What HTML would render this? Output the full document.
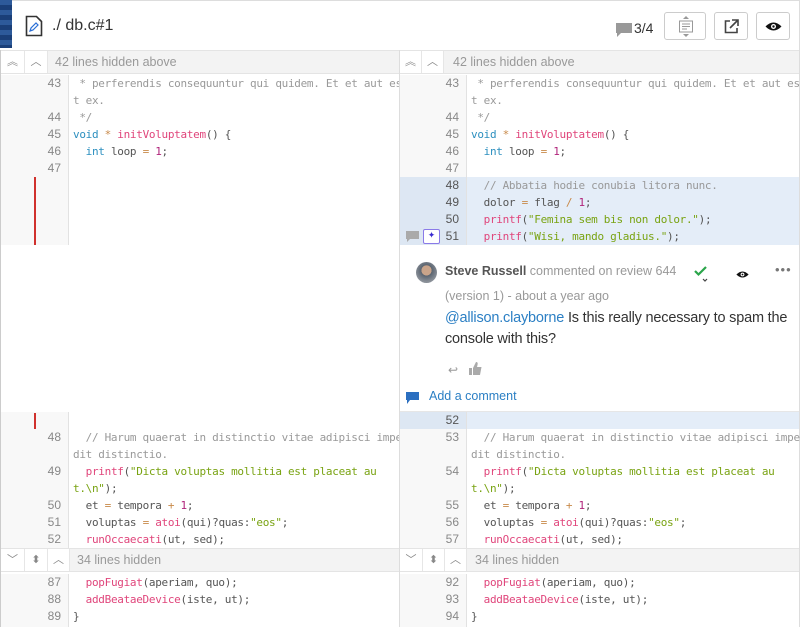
<!DOCTYPE html>
<html><head><meta charset="utf-8"><style>
*{box-sizing:border-box;margin:0;padding:0}
body{width:800px;height:627px;overflow:hidden;background:#fff;font-family:"Liberation Sans",sans-serif;position:relative}
.abs{position:absolute}
.side{position:absolute;top:0;width:400px;height:627px}
.row{position:absolute;left:0;height:17px;width:100%;font-family:"DejaVu Sans Mono","Liberation Mono",monospace;font-size:11px;letter-spacing:-0.3px;line-height:17px;color:#555;white-space:pre}
.g{position:absolute;left:0;width:68px;height:100%;text-align:right;padding-right:7px;color:#888;background:#f8f8f8;border-right:1px solid #e2e2e2;font-family:"Liberation Sans",sans-serif;font-size:12px;letter-spacing:0}
.c{position:absolute;left:72px}
.hl .g{background:#dde7f3;color:#555}
.hl{background:#e4edf8}
.hid{position:absolute;height:24px;width:100%;background:#f3f3f3;border-top:1px solid #e4e4e4;border-bottom:1px solid #e4e4e4;font-size:12.5px;color:#999;line-height:23px}
.hb{position:absolute;top:0;width:33px;height:22px;background:#fff;border-right:1px solid #e6e6e6;color:#888;font-size:11px;text-align:center}
.cm{color:#999}.kw{color:#2c8fbf}.fn{color:#e0457b}.st{color:#79a312}.nu{color:#b0247a}.op{color:#c88a4a}
.btn{position:absolute;top:12px;height:28px;border:1px solid #ccc;border-radius:3px;background:#fff}
</style></head><body>
<div class="abs" style="left:0;top:0;width:800px;height:50px;border-top:1px solid #ddd;border-right:1px solid #ddd"></div>
<div class="abs" style="left:0;top:0;width:12px;height:48px;background:repeating-linear-gradient(#2d5a9a 0 5px,#1a3f78 5px 10px)"></div>
<svg class="abs" style="left:25px;top:15px" width="18" height="22" viewBox="0 0 18 22"><path d="M1.5 1.5h10l5 5v14h-15z" fill="none" stroke="#333" stroke-width="1.6"/><path d="M5 16l1-3 5-5 2 2-5 5z" fill="none" stroke="#2a6fd6" stroke-width="1.2"/></svg>
<div class="abs" style="left:52px;top:17px;font-size:16px;color:#333">./ db.c#1</div>
<svg class="abs" style="left:616px;top:23px" width="16" height="14" viewBox="0 0 16 14"><path d="M0 0h16v10H5l-4 4v-4H0z" fill="#999"/></svg>
<div class="abs" style="left:634px;top:20px;font-size:14px;color:#333">3/4</div>
<div class="btn" style="left:664px;width:42px"><svg style="position:absolute;left:13px;top:3px" width="16" height="22" viewBox="0 0 16 22"><path d="M8 0l3 3H5z" fill="#999"/><rect x="1.5" y="5" width="13" height="11" fill="none" stroke="#999"/><path d="M4 8h8M4 10.5h8M4 13h5" stroke="#999"/><path d="M8 21l3-3H5z" fill="#999"/></svg></div>
<div class="btn" style="left:714px;width:34px"><svg style="position:absolute;left:9px;top:6px" width="15" height="15" viewBox="0 0 15 15"><path d="M6 2H1.5v11.5H13V9" fill="none" stroke="#444" stroke-width="1.6"/><path d="M8 1h6v6M14 1L6 9" fill="none" stroke="#444" stroke-width="1.6"/></svg></div>
<div class="btn" style="left:756px;width:34px"><svg style="position:absolute;left:8px;top:8px" width="17" height="11" viewBox="0 0 17 11"><path d="M0.5 5.5Q8.5-2.5 16.5 5.5Q8.5 13.5 0.5 5.5z" fill="#111"/><circle cx="8.5" cy="5.5" r="2.5" fill="#fff"/><circle cx="8.5" cy="5.5" r="1.2" fill="#111"/></svg></div>
<div class="abs" style="left:0;top:50px;width:1px;height:577px;background:#ccc"></div>
<div class="abs" style="left:799px;top:50px;width:1px;height:577px;background:#ddd"></div>

<div class="side" style="left:1px;width:398px">
 <div class="hid" style="top:50px"><div class="hb" style="left:0;width:24px">︽</div><div class="hb" style="left:24px;width:23px">︿</div><span style="position:absolute;left:54px">42 lines hidden above</span></div>
 <div class="row" style="top:75px"><div class="g">43</div><span class="c cm"> * perferendis consequuntur qui quidem. Et et aut es</span></div>
 <div class="row" style="top:92px"><div class="g"></div><span class="c cm">t ex.</span></div>
 <div class="row" style="top:109px"><div class="g">44</div><span class="c cm"> */</span></div>
 <div class="row" style="top:126px"><div class="g">45</div><span class="c"><span class="kw">void</span> <span class="op">*</span> <span class="fn">initVoluptatem</span>() {</span></div>
 <div class="row" style="top:143px"><div class="g">46</div><span class="c">  <span class="kw">int</span> loop <span class="op">=</span> <span class="nu">1</span>;</span></div>
 <div class="row" style="top:160px"><div class="g">47</div></div>
 <div class="row" style="top:177px;height:68px"><div class="g"></div><div class="abs" style="left:33px;top:0;width:2px;height:68px;background:#d0312d"></div></div>
 <div class="row" style="top:412px"><div class="g"></div><div class="abs" style="left:33px;top:1px;width:2px;height:16px;background:#d0312d"></div></div>
 <div class="row" style="top:429px"><div class="g">48</div><span class="c cm">  // Harum quaerat in distinctio vitae adipisci impe</span></div>
 <div class="row" style="top:446px"><div class="g"></div><span class="c cm">dit distinctio.</span></div>
 <div class="row" style="top:463px"><div class="g">49</div><span class="c">  <span class="fn">printf</span>(<span class="st">"Dicta voluptas mollitia est placeat au</span></span></div>
 <div class="row" style="top:480px"><div class="g"></div><span class="c"><span class="st">t.\n"</span>);</span></div>
 <div class="row" style="top:497px"><div class="g">50</div><span class="c">  et <span class="op">=</span> tempora <span class="op">+</span> <span class="nu">1</span>;</span></div>
 <div class="row" style="top:514px"><div class="g">51</div><span class="c">  voluptas <span class="op">=</span> <span class="fn">atoi</span>(qui)?quas:<span class="st">"eos"</span>;</span></div>
 <div class="row" style="top:531px"><div class="g">52</div><span class="c">  <span class="fn">runOccaecati</span>(ut, sed);</span></div>
 <div class="hid" style="top:548px"><div class="hb" style="left:0;width:24px">﹀</div><div class="hb" style="left:24px;width:23px">⬍</div><div class="hb" style="left:47px;width:22px">︿</div><span style="position:absolute;left:76px">34 lines hidden</span></div>
 <div class="row" style="top:574px"><div class="g">87</div><span class="c">  <span class="fn">popFugiat</span>(aperiam, quo);</span></div>
 <div class="row" style="top:591px"><div class="g">88</div><span class="c">  <span class="fn">addBeataeDevice</span>(iste, ut);</span></div>
 <div class="row" style="top:608px;height:19px"><div class="g">89</div><span class="c">}</span></div>
</div>
<div class="abs" style="left:399px;top:50px;width:1px;height:577px;background:#ddd"></div>

<div class="side" style="left:400px;width:399px">
 <div class="hid" style="top:50px"><div class="hb" style="left:0;width:22px">︽</div><div class="hb" style="left:22px;width:22px">︿</div><span style="position:absolute;left:53px">42 lines hidden above</span></div>
 <div class="row" style="top:75px"><div class="g" style="width:67px">43</div><span class="c cm" style="left:71px"> * perferendis consequuntur qui quidem. Et et aut es</span></div>
 <div class="row" style="top:92px"><div class="g" style="width:67px"></div><span class="c cm" style="left:71px">t ex.</span></div>
 <div class="row" style="top:109px"><div class="g" style="width:67px">44</div><span class="c cm" style="left:71px"> */</span></div>
 <div class="row" style="top:126px"><div class="g" style="width:67px">45</div><span class="c" style="left:71px"><span class="kw">void</span> <span class="op">*</span> <span class="fn">initVoluptatem</span>() {</span></div>
 <div class="row" style="top:143px"><div class="g" style="width:67px">46</div><span class="c" style="left:71px">  <span class="kw">int</span> loop <span class="op">=</span> <span class="nu">1</span>;</span></div>
 <div class="row" style="top:160px"><div class="g" style="width:67px">47</div></div>
 <div class="row hl" style="top:177px"><div class="g" style="width:67px">48</div><span class="c cm" style="left:71px">  // Abbatia hodie conubia litora nunc.</span></div>
 <div class="row hl" style="top:194px"><div class="g" style="width:67px">49</div><span class="c" style="left:71px">  dolor <span class="op">=</span> flag <span class="op">/</span> <span class="nu">1</span>;</span></div>
 <div class="row hl" style="top:211px"><div class="g" style="width:67px">50</div><span class="c" style="left:71px">  <span class="fn">printf</span>(<span class="st">"Femina sem bis non dolor."</span>);</span></div>
 <div class="row hl" style="top:228px"><div class="g" style="width:67px">51</div><span class="c" style="left:71px">  <span class="fn">printf</span>(<span class="st">"Wisi, mando gladius."</span>);</span>
  <svg class="abs" style="left:6px;top:3px" width="13" height="11" viewBox="0 0 13 11"><path d="M0 0h13v8H4l-3 3V8H0z" fill="#aaa"/></svg>
  <div class="abs" style="left:23px;top:1px;width:17px;height:15px;border:1px solid #8a7ae8;border-radius:2px;background:#fff;color:#3a2bd0;font-size:9px;line-height:13px;text-align:center;font-family:'DejaVu Sans',sans-serif;letter-spacing:0">✦</div>
 </div>
 <div class="abs" style="left:16px;top:262px;width:21px;height:21px;border-radius:50%;background:radial-gradient(circle at 50% 40%,#c9a48a 0 30%,#5a6470 32%,#8a9098 70%)"></div>
 <div class="abs" style="left:45px;top:264px;font-size:12.5px;color:#999"><b style="color:#555">Steve Russell</b> commented on review 644</div>
 <svg class="abs" style="left:294px;top:266px" width="14" height="18" viewBox="0 0 14 18"><path d="M1 5l3.5 3.5L12 1" fill="none" stroke="#2aa54a" stroke-width="2.2"/><path d="M9 13l2 2 2-2" fill="none" stroke="#444" stroke-width="1.2"/></svg>
 <svg class="abs" style="left:336px;top:270px" width="13" height="9" viewBox="0 0 17 11"><path d="M0.5 5.5Q8.5-2.5 16.5 5.5Q8.5 13.5 0.5 5.5z" fill="#111"/><circle cx="8.5" cy="5.5" r="2.5" fill="#fff"/><circle cx="8.5" cy="5.5" r="1.2" fill="#111"/></svg>
 <div class="abs" style="left:375px;top:262px;font-size:13px;color:#777;letter-spacing:1px">•••</div>
 <div class="abs" style="left:45px;top:289px;font-size:12.5px;color:#999">(version 1) - about a year ago</div>
 <div class="abs" style="left:45px;top:308px;font-size:14.5px;color:#333;line-height:21px;white-space:nowrap;letter-spacing:-0.2px"><span style="color:#2b7fc4">@allison.clayborne</span> Is this really necessary to spam the<br>console with this?</div>
 <div class="abs" style="left:48px;top:363px;font-size:12px;color:#999">↩</div>
 <svg class="abs" style="left:69px;top:362px" width="13" height="13" viewBox="0 0 13 13"><path d="M0 6h3v7H0zM4 6l3-6c1.5 0 2 1 1.5 3L8 5h4.5l-1.5 8H4z" fill="#aaa"/></svg>
 <svg class="abs" style="left:6px;top:392px" width="13" height="12" viewBox="0 0 13 12"><path d="M0 0h13v8H4l-3 4V8H0z" fill="#2b6fc0"/></svg>
 <div class="abs" style="left:29px;top:389px;font-size:12.5px;color:#2b7fc4">Add a comment</div>
 <div class="abs" style="left:0;top:411px;width:399px;height:1px;background:#e6e6e6"></div>
 <div class="row hl" style="top:412px"><div class="g" style="width:67px">52</div></div>
 <div class="row" style="top:429px"><div class="g" style="width:67px">53</div><span class="c cm" style="left:71px">  // Harum quaerat in distinctio vitae adipisci impe</span></div>
 <div class="row" style="top:446px"><div class="g" style="width:67px"></div><span class="c cm" style="left:71px">dit distinctio.</span></div>
 <div class="row" style="top:463px"><div class="g" style="width:67px">54</div><span class="c" style="left:71px">  <span class="fn">printf</span>(<span class="st">"Dicta voluptas mollitia est placeat au</span></span></div>
 <div class="row" style="top:480px"><div class="g" style="width:67px"></div><span class="c" style="left:71px"><span class="st">t.\n"</span>);</span></div>
 <div class="row" style="top:497px"><div class="g" style="width:67px">55</div><span class="c" style="left:71px">  et <span class="op">=</span> tempora <span class="op">+</span> <span class="nu">1</span>;</span></div>
 <div class="row" style="top:514px"><div class="g" style="width:67px">56</div><span class="c" style="left:71px">  voluptas <span class="op">=</span> <span class="fn">atoi</span>(qui)?quas:<span class="st">"eos"</span>;</span></div>
 <div class="row" style="top:531px"><div class="g" style="width:67px">57</div><span class="c" style="left:71px">  <span class="fn">runOccaecati</span>(ut, sed);</span></div>
 <div class="hid" style="top:548px"><div class="hb" style="left:0;width:23px">﹀</div><div class="hb" style="left:23px;width:22px">⬍</div><div class="hb" style="left:45px;width:22px">︿</div><span style="position:absolute;left:75px">34 lines hidden</span></div>
 <div class="row" style="top:574px"><div class="g" style="width:67px">92</div><span class="c" style="left:71px">  <span class="fn">popFugiat</span>(aperiam, quo);</span></div>
 <div class="row" style="top:591px"><div class="g" style="width:67px">93</div><span class="c" style="left:71px">  <span class="fn">addBeataeDevice</span>(iste, ut);</span></div>
 <div class="row" style="top:608px;height:19px"><div class="g" style="width:67px">94</div><span class="c" style="left:71px">}</span></div>
</div>
</body></html>
